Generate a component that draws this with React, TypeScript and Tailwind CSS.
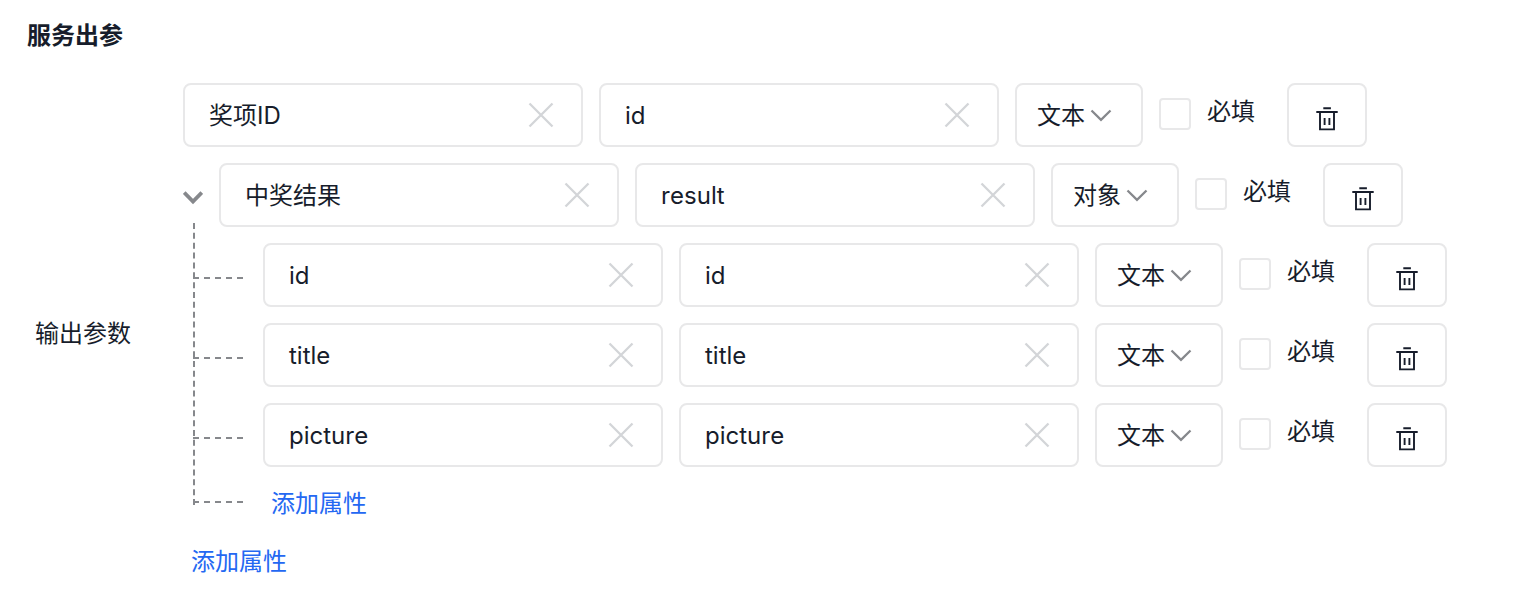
type Param = { name: string; field: string; type: string };

const objectParam: Param = { name: '中奖结果', field: 'result', type: '对象' };
const children: Param[] = [
  { name: 'id', field: 'id', type: '文本' },
  { name: 'title', field: 'title', type: '文本' },
  { name: 'picture', field: 'picture', type: '文本' },
];

function ClearIcon() {
  return (
    <svg width="26" height="26" viewBox="0 0 26 26" fill="none" stroke="#d3d5d8" strokeWidth="2.3">
      <path d="M1.5 1.5 24.5 24.5M24.5 1.5 1.5 24.5" />
    </svg>
  );
}

function TrashIcon() {
  return (
    <svg className="mt-2" width="22" height="24" viewBox="0 0 22 24" fill="none" stroke="#171d2b" strokeWidth="1.9">
      <path d="M7.3 1.2h7.6M0.3 5h21.4M4 5v17.4h14V5M8.6 11v7M13.4 11v7" />
    </svg>
  );
}

function TextField({ value }: { value: string }) {
  return (
    <div className="flex h-16 w-[400px] shrink-0 items-center justify-between rounded-lg border-2 border-[#e8e8e9] pr-[27px] pl-6">
      <span className="pt-0.5 [font-kerning:none]">{value}</span>
      <ClearIcon />
    </div>
  );
}

function ParamRow({ param }: { param: Param }) {
  return (
    <div className="flex h-16 items-center gap-4">
      <TextField value={param.name} />
      <TextField value={param.field} />
      <div className="flex h-16 w-32 shrink-0 items-center gap-[5px] rounded-lg border-2 border-[#e8e8e9] pl-5">
        <span className="pt-0.5">{param.type}</span>
        <svg width="22" height="13" viewBox="0 0 22 13" fill="none" stroke="#86888c" strokeWidth="2.3">
          <path d="M1.5 1.5 11 10.8 20.5 1.5" />
        </svg>
      </div>
      <div className="mt-[-2px] size-8 shrink-0 rounded border-2 border-[#e8e8e9]" />
      <span className="mt-[-6px] mr-4 shrink-0">必填</span>
      <div className="flex h-16 w-20 shrink-0 items-center justify-center rounded-lg border-2 border-[#e8e8e9]">
        <TrashIcon />
      </div>
    </div>
  );
}

function TreeRail() {
  return (
    <div className="flex w-9 shrink-0 flex-col">
      <svg className="mt-7" width="20" height="15" viewBox="0 0 20 15" fill="none" stroke="#86888c" strokeWidth="3.8">
        <path d="M1.2 1.6 10 10.6 18.8 1.6" />
      </svg>
      <div className="mt-[17px] ml-2.5 flex h-[282px] w-[50px] shrink-0 flex-col border-l-2 border-dashed border-[#86888c]">
        <div className="mt-[54px] ml-[-2px] h-20 w-[50px] shrink-0 border-t-2 border-dashed border-[#86888c]" />
        <div className="ml-[-2px] h-20 w-[50px] shrink-0 border-t-2 border-dashed border-[#86888c]" />
        <div className="ml-[-2px] h-16 w-[50px] shrink-0 border-t-2 border-dashed border-[#86888c]" />
        <div className="ml-[-2px] w-[50px] shrink-0 border-t-2 border-dashed border-[#86888c]" />
      </div>
    </div>
  );
}

function AddLink() {
  return <button type="button" className="block h-9 text-left leading-9 text-[#2468f2]">添加属性</button>;
}

export default function App() {
  return (
    <main className="h-[590px] w-[1514px] overflow-hidden bg-white font-['Inter','Noto_Sans_CJK_SC',sans-serif] text-2xl leading-9 text-[#171d2b]">
      <h1 className="pt-[18px] pl-[27px] leading-9 font-bold">服务出参</h1>
      <div className="mt-[29px] flex">
        <div className="mt-[233px] w-[183px] shrink-0 pl-[35px]">输出参数</div>
        <div>
          <ParamRow param={{ name: '奖项ID', field: 'id', type: '文本' }} />
          <div className="mt-4 flex h-[360px]">
            <TreeRail />
            <div className="flex flex-col gap-4">
              <ParamRow param={objectParam} />
              <div className="ml-11 flex flex-col gap-4">
                {children.map((child) => (
                  <ParamRow key={child.name} param={child} />
                ))}
                <div className="mt-[3px] ml-2">
                  <AddLink />
                </div>
              </div>
            </div>
          </div>
          <div className="mt-[21px] ml-2">
            <AddLink />
          </div>
        </div>
      </div>
    </main>
  );
}
